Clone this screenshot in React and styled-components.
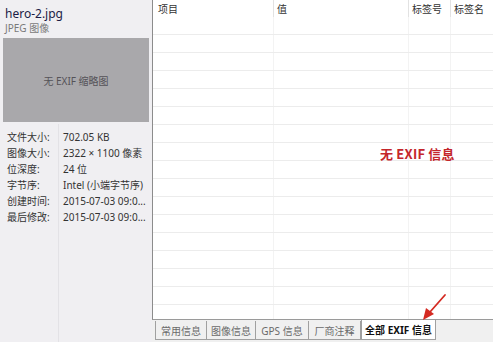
import React from "react";
import styled, { createGlobalStyle } from "styled-components";

const Global = createGlobalStyle`
  html, body { margin: 0; padding: 0; background: #ffffff; }
  body { font-family: "Noto Sans", "Noto Sans CJK SC", sans-serif; }
`;

const Window = styled.div`
  width: 493px;
  height: 342px;
  display: flex;
  overflow: hidden;
  position: relative;
  background: #f0f0f2;
`;

const Sidebar = styled.aside`
  width: 152px;
  flex: none;
  display: flex;
  flex-direction: column;
  background: #f0eff2;
`;

const FileHead = styled.div`
  padding: 6px 5px 0 5px;
  height: 38px;
  box-sizing: border-box;
`;

const FileName = styled.div`
  font-size: 12px;
  line-height: 16px;
  color: #1b1b45;
  font-family: "Noto Sans", "Noto Sans CJK SC", sans-serif;
`;

const FileType = styled.div`
  font-size: 10px;
  line-height: 13px;
  color: #7a7a7a;
  font-family: "Noto Sans", "Noto Sans CJK SC", sans-serif;
`;

const Thumb = styled.div`
  margin: 0 3px;
  height: 84px;
  background: #a9a8ab;
  display: flex;
  align-items: center;
  justify-content: center;
  font-size: 10px;
  color: #555358;
  font-family: "Noto Sans", "Noto Sans CJK SC", sans-serif;
`;

const InfoGrid = styled.div`
  flex: 1;
  display: grid;
  grid-template-columns: 58px 1fr;
  grid-auto-rows: 16px;
  align-content: start;
  padding-top: 7px;
  position: relative;
  &::before {
    content: "";
    position: absolute;
    left: 58px;
    top: 2px;
    bottom: 0;
    width: 1px;
    background: #e3e2e6;
  }
`;

const Label = styled.div`
  padding-left: 7px;
  font-size: 10px;
  line-height: 16px;
  color: #333;
  white-space: nowrap;
  font-family: "Noto Sans", "Noto Sans CJK SC", sans-serif;
`;

const Value = styled.div`
  padding-left: 5px;
  font-size: 10px;
  line-height: 16px;
  color: #333;
  white-space: nowrap;
  font-family: "Noto Sans", "Noto Sans CJK SC", sans-serif;
`;

const Main = styled.main`
  flex: 1;
  display: flex;
  flex-direction: column;
  position: relative;
`;

const TablePane = styled.div`
  height: 320px;
  box-sizing: border-box;
  background: #ffffff;
  border-left: 1px solid #8c8c8c;
  border-bottom: 1px solid #9a9a9a;
  overflow: hidden;
  position: relative;
`;

const cols = "121px 135px 42px 1fr";

const HeaderRow = styled.div`
  display: grid;
  grid-template-columns: ${cols};
  height: 17px;
`;

const HeadCell = styled.div`
  font-size: 10px;
  line-height: 18px;
  padding-left: ${(p) => (p.$first ? 5 : 3)}px;
  color: #333;
  border-right: 1px solid ${(p) => (p.$last ? "transparent" : "#e2e2e2")};
  font-family: "Noto Sans CJK SC", sans-serif;
`;

const Row = styled.div`
  display: grid;
  grid-template-columns: ${cols};
  height: 18px;
  border-bottom: 1px solid #ececec;
  box-sizing: border-box;
`;

const Cell = styled.div`
  border-right: 1px solid ${(p) => (p.$last ? "transparent" : "#f3f3f3")};
`;

const Message = styled.div`
  position: absolute;
  left: 227px;
  top: 144px;
  font-size: 13px;
  font-weight: bold;
  color: #c4262b;
  font-family: "Noto Sans CJK SC", sans-serif;
  letter-spacing: 0.2px;
`;

const TabStrip = styled.div`
  flex: 1;
  display: flex;
  align-items: flex-start;
  padding-left: 3px;
  background: #f0f0f0;
`;

const Tab = styled.div`
  box-sizing: border-box;
  height: ${(p) => (p.$active ? 21 : 19)}px;
  margin-top: ${(p) => (p.$active ? -1 : 1)}px;
  width: ${(p) => p.$w}px;
  display: flex;
  align-items: center;
  justify-content: center;
  font-size: 10px;
  color: ${(p) => (p.$active ? "#111" : "#6a6a6a")};
  font-weight: ${(p) => (p.$active ? "bold" : "normal")};
  background: ${(p) => (p.$active ? "#ffffff" : "#f0f0f0")};
  border: 1px solid #a0a0a0;
  border-top: ${(p) => (p.$active ? "1px solid #a0a0a0" : "none")};
  border-left: ${(p) => (p.$first || p.$active ? "1px solid #a0a0a0" : "none")};
  font-family: "Noto Sans", "Noto Sans CJK SC", sans-serif;
`;

const Arrow = styled.svg`
  position: absolute;
  left: 269px;
  top: 292px;
`;

const info = [
  ["文件大小:", "702.05 KB"],
  ["图像大小:", "2322 × 1100 像素"],
  ["位深度:", "24 位"],
  ["字节序:", "Intel (小端字节序)"],
  ["创建时间:", "2015-07-03 09:0..."],
  ["最后修改:", "2015-07-03 09:0..."],
];

const tabs = [
  { t: "常用信息", w: 52 },
  { t: "图像信息", w: 49 },
  { t: "GPS 信息", w: 53 },
  { t: "厂商注释", w: 52 },
  { t: "全部 EXIF 信息", w: 75, active: true },
];

export default function App() {
  return (
    <>
      <Global />
      <Window>
        <Sidebar>
          <FileHead>
            <FileName>hero-2.jpg</FileName>
            <FileType>JPEG 图像</FileType>
          </FileHead>
          <Thumb>无 EXIF 缩略图</Thumb>
          <InfoGrid>
            {info.map(([l, v]) => (
              <React.Fragment key={l}>
                <Label>{l}</Label>
                <Value>{v}</Value>
              </React.Fragment>
            ))}
          </InfoGrid>
        </Sidebar>
        <Main>
          <TablePane>
            <HeaderRow>
              <HeadCell $first>项目</HeadCell>
              <HeadCell>值</HeadCell>
              <HeadCell>标签号</HeadCell>
              <HeadCell $last>标签名</HeadCell>
            </HeaderRow>
            {Array.from({ length: 17 }).map((_, i) => (
              <Row key={i}>
                <Cell />
                <Cell />
                <Cell />
                <Cell $last />
              </Row>
            ))}
            <Message>无 EXIF 信息</Message>
          </TablePane>
          <TabStrip>
            {tabs.map((tb, i) => (
              <Tab key={tb.t} $w={tb.w} $active={tb.active} $first={i === 0}>
                {tb.t}
              </Tab>
            ))}
          </TabStrip>
          <Arrow width="28" height="30" viewBox="0 0 28 30">
            <line x1="24" y1="3" x2="9" y2="20" stroke="#d42a22" strokeWidth="1.8" strokeLinecap="round" />
            <polygon points="2,28 5,16 13,22" fill="#d42a22" />
          </Arrow>
        </Main>
      </Window>
    </>
  );
}
